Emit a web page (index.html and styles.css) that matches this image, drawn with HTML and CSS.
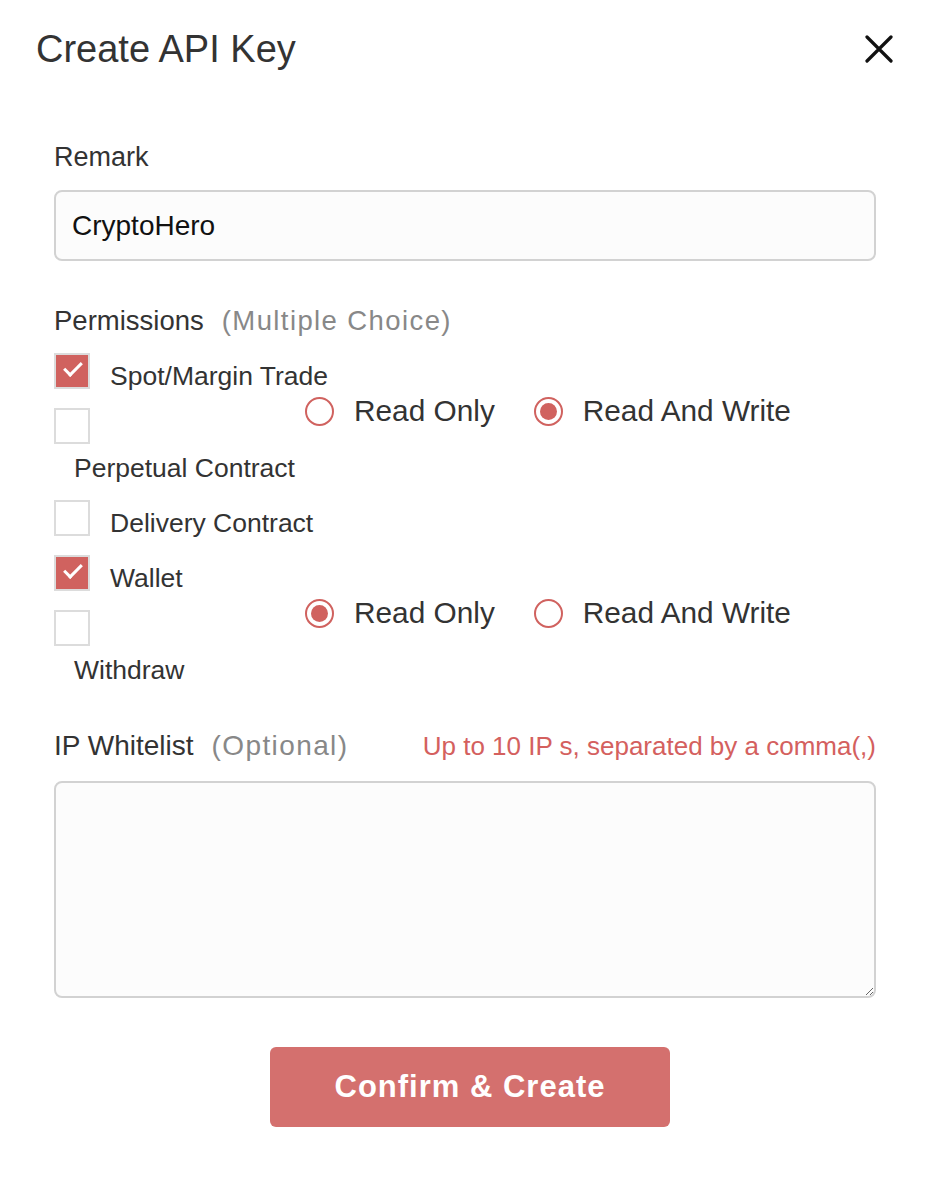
FILE: index.html
```html
<!DOCTYPE html>
<html lang="en">
<head>
<meta charset="UTF-8" />
<meta name="viewport" content="width=device-width, initial-scale=1" />
<title>Create API Key</title>
<link rel="stylesheet" href="styles.css">
</head>
<body>
  <div class="dialog">
    <div class="dialog-header">
      <h2>Create API Key</h2>
      <button class="close" aria-label="Close">
        <svg width="28" height="28" viewBox="0 0 28 28"><path d="M2 2 L26 26 M26 2 L2 26" stroke="#111" stroke-width="3.2" stroke-linecap="round"/></svg>
      </button>
    </div>

    <form class="dialog-body">
      <label class="field-label" for="remark">Remark</label>
      <input id="remark" class="text-input" value="CryptoHero" />

      <div class="field-label perm-title">Permissions<span class="muted">(Multiple Choice)</span></div>

      
      <div class="check-row first">
        <span class="box checked"></span>
        <span class="check-text">Spot/Margin Trade</span>
      </div>
      <div class="check-row">
        <span class="box"></span>
        <div class="radios">
          <label class="radio"><span class="dot"></span>Read Only</label>
          <label class="radio"><span class="dot on"></span>Read And Write</label>
        </div>
      </div>
      <div class="wrap-text">Perpetual Contract</div>

      <div class="check-row after-text">
        <span class="box"></span>
        <span class="check-text">Delivery Contract</span>
      </div>

      <div class="check-row">
        <span class="box checked"></span>
        <span class="check-text">Wallet</span>
      </div>
      <div class="check-row">
        <span class="box"></span>
        <div class="radios">
          <label class="radio"><span class="dot on"></span>Read Only</label>
          <label class="radio"><span class="dot"></span>Read And Write</label>
        </div>
      </div>
      <div class="wrap-text">Withdraw</div>

      <div class="ip-head">
        <span class="field-label">IP Whitelist<span class="muted">(Optional)</span></span>
        <span class="hint">Up to 10 IP s, separated by a comma(,)</span>
      </div>
      <textarea class="ip-box"></textarea>

      <div class="actions">
        <button type="button" class="btn-confirm">Confirm &amp; Create</button>
      </div>
    </form>
  </div>
</body>
</html>
```

FILE: styles.css
```css
body { margin: 0; background: #fff; font-family: "Liberation Sans", Arial, sans-serif; color: #333; }
.dialog { width: 930px; }
.dialog-header { display: flex; justify-content: space-between; align-items: center; padding: 24px 37px 0 36px; height: 50px; }
.dialog-header h2 { margin: 0; font-size: 38px; font-weight: normal; line-height: 50px; color: #333; }
.close { background: none; border: none; padding: 0; width: 28px; height: 28px; cursor: pointer; }
.close svg { display: block; }

.dialog-body { padding: 68px 54px 0; display: flex; flex-direction: column; }
.field-label { font-size: 27px; line-height: 30px; color: #333; }
.muted { color: #888; margin-left: 18px; letter-spacing: 1.4px; }

.text-input { margin-top: 18px; height: 71px; box-sizing: border-box; border: 2px solid #d2d2d2; border-radius: 8px; background: #fcfcfc; padding: 0 16px; font-family: inherit; font-size: 28px; color: #111; outline: none; }

.perm-title { margin-top: 45px; font-size: 27.5px; }

.check-row { display: flex; align-items: center; height: 36px; margin-top: 19px; }
.check-row.first { margin-top: 17px; }
.check-row.after-text { margin-top: 17px; }
.box { width: 36px; height: 36px; box-sizing: border-box; border: 2px solid #dcdcdc; background: #fff; flex: none; position: relative; }
.box.checked { background: #d0625f; }
.box.checked::after { content: ""; position: absolute; left: 8px; top: 7px; width: 15px; height: 7px; border-left: 3.5px solid #fff; border-bottom: 3.5px solid #fff; transform: rotate(-45deg); }
.check-text { font-size: 26.5px; margin-left: 20px; margin-top: 10px; }
.wrap-text { font-size: 26.5px; line-height: 30px; margin-top: 9px; padding-left: 20px; }

.radios { display: flex; align-items: center; margin-left: 215px; align-self: flex-start; margin-top: -15px; height: 36px; }
.radio { display: flex; align-items: center; font-size: 29.8px; margin-right: 39px; }
.dot { width: 29px; height: 29px; box-sizing: border-box; border: 2px solid #d0625f; border-radius: 50%; margin-right: 20px; position: relative; flex: none; }
.dot.on::after { content: ""; position: absolute; left: 4px; top: 4px; width: 17px; height: 17px; border-radius: 50%; background: #d0625f; }

.ip-head { display: flex; justify-content: space-between; align-items: baseline; margin-top: 46px; }
.ip-head .field-label { font-size: 28px; }
.hint { color: #d4605e; font-size: 26px; }
.ip-box { margin-top: 19px; height: 217px; box-sizing: border-box; border: 2px solid #d2d2d2; border-radius: 8px; background: #fcfcfc; font-family: inherit; font-size: 24px; padding: 12px 16px; outline: none; }

.actions { display: flex; justify-content: center; margin-top: 49px; padding-left: 10px; }
.btn-confirm { width: 400px; height: 80px; border: none; border-radius: 6px; background: #d4706e; color: #fff; font-family: inherit; font-size: 31px; font-weight: bold; letter-spacing: 1px; cursor: pointer; }
```
